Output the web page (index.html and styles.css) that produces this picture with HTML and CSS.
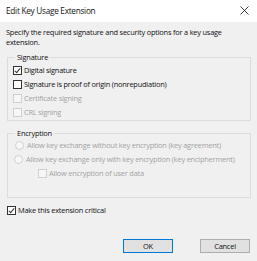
FILE: index.html
```html
<!DOCTYPE html>
<html lang="en">
<head>
    <meta charset="UTF-8">
    <title>Edit Key Usage Extension</title>
    <link rel="stylesheet" href="styles.css">
</head>
<body>
    <div class="dialog">
        <div class="titlebar">
            <span class="title">Edit Key Usage Extension</span>
            <svg class="close" width="9" height="9" viewBox="0 0 9 9">
                <path d="M0.5 0.5 L8.5 8.5 M8.5 0.5 L0.5 8.5" stroke="#222" stroke-width="0.9" fill="none"/>
            </svg>
        </div>
        <div class="client">
            <p class="intro">Specify the required signature and security options for a key usage<br>extension.</p>

            <fieldset class="group">
                <legend>Signature</legend>
                <label class="row"><span class="box checked"></span>Digital signature</label>
                <label class="row"><span class="box"></span>Signature is proof of origin (nonrepudiation)</label>
                <label class="row disabled"><span class="box"></span>Certificate signing</label>
                <label class="row disabled"><span class="box"></span>CRL signing</label>
            </fieldset>

            <fieldset class="group enc">
                <legend>Encryption</legend>
                <label class="row disabled radio-row"><span class="radio"></span>Allow key exchange without key encryption (key agreement)</label>
                <label class="row disabled radio-row second"><span class="radio"></span>Allow key exchange only with key encryption (key encipherment)</label>
                <label class="row disabled sub"><span class="box"></span>Allow encryption of user data</label>
            </fieldset>

            <label class="row critical"><span class="box checked"></span>Make this extension critical</label>

            <div class="buttons">
                <button class="btn default">OK</button>
                <button class="btn">Cancel</button>
            </div>
        </div>
    </div>
</body>
</html>
```

FILE: styles.css
```css
html, body {
    margin: 0;
    padding: 0;
}
body {
    font-family: "Open Sans", "Noto Sans", Arial, sans-serif;
    font-size: 7.4px;
    letter-spacing: -0.2px;
    color: #000;
    background: #f0f0f0;
}
.dialog {
    width: 257px;
    height: 261px;
    background: #f0f0f0;
    overflow: hidden;
}
.titlebar {
    height: 22px;
    background: #fff;
    display: flex;
    align-items: center;
    justify-content: space-between;
    padding: 0 8px 1px 6px;
    box-sizing: border-box;
}
.title {
    font-size: 8.2px;
    letter-spacing: -0.25px;
    color: #111;
}
.client {
    padding: 5px 6px 0 7px;
}
.intro {
    margin: 0 0 5px -1px;
    line-height: 10px;
    color: #111;
}
.group {
    margin: 0;
    padding: 1px 4px 1px 5px;
    border: 1px solid #dcdcdc;
    min-width: 0;
}
.group legend {
    padding: 0 2px;
    margin-left: 2px;
    line-height: 10px;
    color: #111;
}
.group.enc {
    margin-top: 7px;
    padding-top: 0;
    padding-bottom: 17px;
}
.row {
    display: flex;
    align-items: center;
    height: 14px;
    white-space: nowrap;
    color: #111;
}
.row.disabled {
    color: #a3a3a3;
}
.box {
    width: 9px;
    height: 9px;
    box-sizing: border-box;
    border: 1px solid #333;
    background: #fff;
    margin-right: 2px;
    flex: none;
    position: relative;
}
.disabled .box {
    border-color: #cfcfcf;
    background: #f7f7f7;
}
.box.checked::after {
    content: "";
    position: absolute;
    left: 2px;
    top: 0;
    width: 2px;
    height: 5px;
    border: solid #333;
    border-width: 0 1px 1px 0;
    transform: rotate(40deg);
}
.radio {
    width: 9px;
    height: 9px;
    box-sizing: border-box;
    border: 1px solid #cfcfcf;
    border-radius: 50%;
    background: #f7f7f7;
    margin-right: 3px;
    flex: none;
}
.radio-row {
    margin-left: 2px;
}
.radio-row.second {
    margin-left: 1px;
}
.sub {
    padding-left: 25px;
}
.critical {
    margin-top: 5px;
}
.buttons {
    display: flex;
    justify-content: flex-end;
    gap: 27px;
    margin-top: 22px;
    padding-right: 1px;
}
.btn {
    width: 50px;
    height: 14px;
    padding: 0;
    font-family: inherit;
    font-size: 7.4px;
    letter-spacing: -0.2px;
    color: #111;
    background: #e1e1e1;
    border: 1px solid #adadad;
    border-radius: 0;
}
.btn.default {
    border-color: #0078d7;
}
```
